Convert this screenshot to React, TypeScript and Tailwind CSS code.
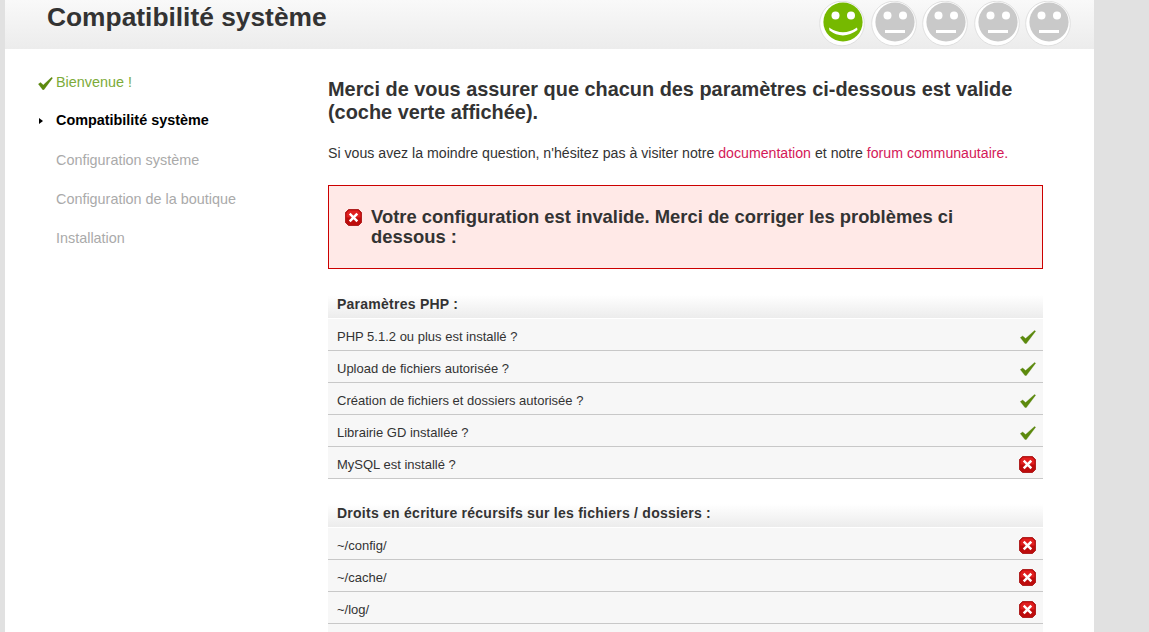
import { Fragment } from 'react';

function Check({ className }: { className: string }) {
  return (
    <svg viewBox="0 0 16 14" className={className}>
      <path d="M0.3 7.6 L2.7 6 L5.6 8.6 L14.6 0.4 L15.6 1.2 L6.3 13.6 L5 13.6 Z" fill="#5c8a0c" stroke="#4f7a06" strokeWidth="0.3" />
    </svg>
  );
}

function ErrorIcon() {
  return (
    <svg viewBox="0 0 17 17" className="h-[17px] w-[17px] shrink-0">
      <path d="M3.5 0.5 H13.5 L16.5 3.5 V13.5 L13.5 16.5 H3.5 L0.5 13.5 V3.5 Z" fill="#bd0c0c" stroke="#a50a0a" strokeWidth="0.8" />
      <path d="M3.9 1.5 H13.1 L15.5 3.9 V8.5 H1.5 V3.9 Z" fill="#e01f1f" />
      <path d="M5.6 5.6 L11.4 11.4 M11.4 5.6 L5.6 11.4" stroke="#ffffff" strokeWidth="2.5" strokeLinecap="square" />
    </svg>
  );
}

function Face({ active }: { active?: boolean }) {
  const fill = active ? '#76b900' : '#c9c9c9';
  return (
    <svg viewBox="0 0 46 46" className="h-[46px] w-[46px] shrink-0">
      <circle cx="23" cy="22.5" r="22.3" fill="#ffffff" stroke="#d9d9d9" strokeWidth="0.8" />
      <circle cx="24" cy="21" r="19.6" fill={fill} />
      <circle cx="16.5" cy="14.5" r="4" fill="#ffffff" />
      <circle cx="32" cy="14.5" r="4" fill="#ffffff" />
      {active ? (
        <path d="M10 26.5 Q24 36 38 26.5 L38.5 29 Q24 39.5 10.5 29.5 Z" fill="#ffffff" />
      ) : (
        <rect x="14" y="29" width="20" height="3" fill="#ffffff" />
      )}
    </svg>
  );
}

const sections = [
  {
    title: 'Paramètres PHP :',
    rows: [
      { label: 'PHP 5.1.2 ou plus est installé ?', ok: true },
      { label: 'Upload de fichiers autorisée ?', ok: true },
      { label: 'Création de fichiers et dossiers autorisée ?', ok: true },
      { label: 'Librairie GD installée ?', ok: true },
      { label: 'MySQL est installé ?', ok: false },
    ],
  },
  {
    title: 'Droits en écriture récursifs sur les fichiers / dossiers :',
    rows: [
      { label: '~/config/', ok: false },
      { label: '~/cache/', ok: false },
      { label: '~/log/', ok: false },
    ],
  },
];

export default function App() {
  return (
    <div className="h-[632px] overflow-hidden bg-[#e1e1e1] pl-[5px] pr-[55px] font-['Liberation_Sans',Arial,sans-serif] text-[#333333]">
      <div className="h-full bg-white">
        <header className="flex h-[49px] items-start justify-between bg-gradient-to-b from-[#f9f9f9] to-[#ececec] pl-[42px] pr-[23px]">
          <h1 className="mt-[1px] text-[26.35px] font-bold leading-[32px] text-[#333333]">Compatibilité système</h1>
          <div className="mt-[1px] flex gap-[5.5px]">
            <Face active />
            <Face />
            <Face />
            <Face />
            <Face />
          </div>
        </header>

        <div className="flex">
          <nav className="w-[323px] shrink-0 pl-[33px] pt-[25px] text-[14.4px]">
            <div className="flex h-[18px] items-center text-[#7cab39]">
              <Check className="h-[13px] w-[15px] shrink-0" />
              <span className="ml-[3px]">Bienvenue !</span>
            </div>
            <div className="mt-[20px] flex h-[18px] items-center font-bold text-black">
              <span className="ml-[1px] h-0 w-0 border-y-[3.5px] border-l-[4px] border-y-transparent border-l-black" />
              <span className="ml-[13px]">Compatibilité système</span>
            </div>
            <div className="mt-[21px] h-[18px] pl-[18px] leading-[18px] text-[#aaaaaa]">Configuration système</div>
            <div className="mt-[21px] h-[18px] pl-[18px] leading-[18px] text-[#aaaaaa]">Configuration de la boutique</div>
            <div className="mt-[21px] h-[18px] pl-[18px] leading-[18px] text-[#aaaaaa]">Installation</div>
          </nav>

          <main className="w-[715px] shrink-0 pt-[29px]">
            <h2 className="text-[19.9px] font-bold leading-[23px] text-[#333333]">
              Merci de vous assurer que chacun des paramètres ci-dessous est valide (coche verte affichée).
            </h2>
            <p className="mt-[20px] whitespace-nowrap text-[14.15px] leading-[18px]">
              Si vous avez la moindre question, n'hésitez pas à visiter notre{' '}
              <span className="text-[#d41958]">documentation</span> et notre{' '}
              <span className="text-[#d41958]">forum communautaire.</span>
            </p>

            <div className="mt-[23px] flex h-[84px] items-start border border-[#cc0000] bg-[#ffe9e7] pl-[16px] pr-[60px] pt-[21px]">
              <span className="mt-[2px]">
                <ErrorIcon />
              </span>
              <p className="ml-[9px] text-[18.4px] font-bold leading-[20px] text-[#333333]">
                Votre configuration est invalide. Merci de corriger les problèmes ci dessous :
              </p>
            </div>

            {sections.map((section, i) => (
              <Fragment key={section.title}>
                <h3
                  className={`${i === 0 ? 'mt-[26px]' : 'mt-[25px]'} h-[23px] bg-gradient-to-b from-white to-[#ececec] pl-[9px] text-[14px] font-bold leading-[18px] tracking-[0.25px] text-[#333333]`}
                >
                  {section.title}
                </h3>
                <ul className="pt-px">
                  {section.rows.map((row) => (
                    <li
                      key={row.label}
                      className="flex h-[32px] items-center justify-between border-b border-[#c8c8c8] bg-[#f7f7f7] pl-[9px] pr-[7px] pt-[3px] text-[13px] text-[#333333]"
                    >
                      <span className="mt-[2px]">{row.label}</span>
                      {row.ok ? <Check className="mt-[2px] h-[14px] w-[16px]" /> : <ErrorIcon />}
                    </li>
                  ))}
                </ul>
              </Fragment>
            ))}
            <div className="h-[32px] bg-[#f7f7f7]" />
          </main>
        </div>
      </div>
    </div>
  );
}
